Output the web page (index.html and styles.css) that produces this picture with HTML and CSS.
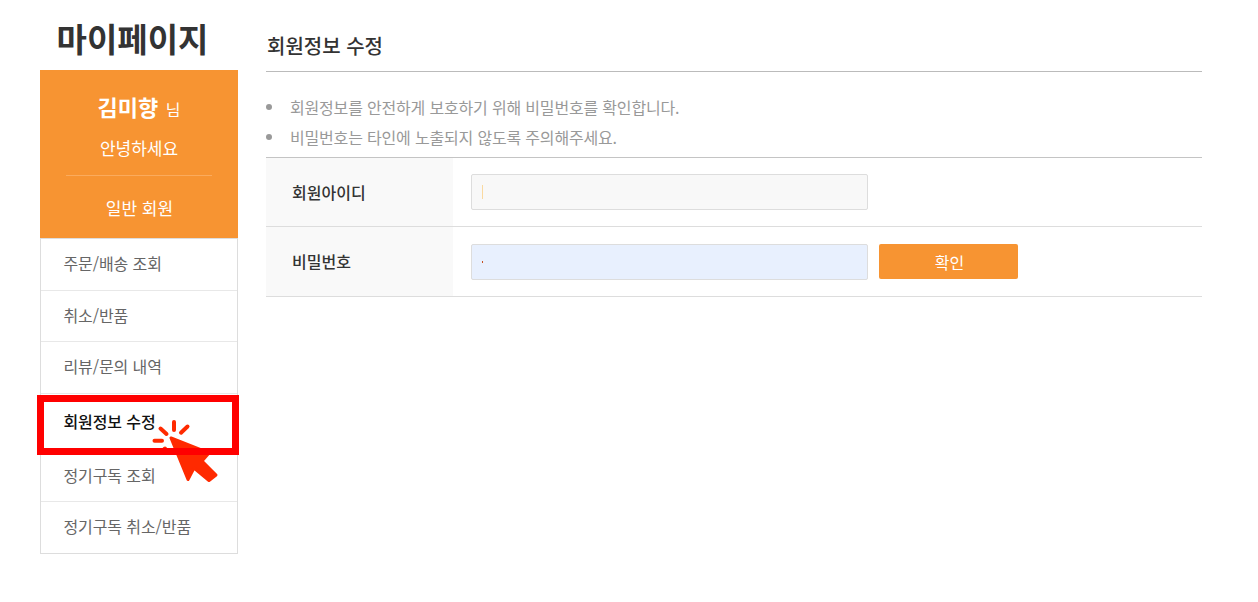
FILE: index.html
```html
<!DOCTYPE html>
<html lang="ko">
<head>
  <meta charset="UTF-8">
  <title>회원정보 수정</title>
  <link rel="stylesheet" href="styles.css">
</head>
<body>
  <div class="page">
    <aside class="side">
      <h1 class="side-title">마이페이지</h1>
      <div class="profile">
        <p class="profile-name"><strong>김미향</strong> <span>님</span></p>
        <p class="profile-hello">안녕하세요</p>
        <p class="profile-grade">일반 회원</p>
      </div>
      <ul class="side-menu">
        <li>주문/배송 조회</li>
        <li>취소/반품</li>
        <li>리뷰/문의 내역</li>
        <li class="on">회원정보 수정</li>
        <li>정기구독 조회</li>
        <li>정기구독 취소/반품</li>
      </ul>
      <svg class="pointer" width="70" height="72" viewBox="0 0 70 72">
        <g stroke="#ff2a00" stroke-width="4" stroke-linecap="round" fill="none">
          <path d="M24 11V19"/>
          <path d="M10.500 17.500L16.500 23"/>
          <path d="M31 21.700L37.500 15.500"/>
          <path d="M4.500 29.700H12"/>
          <path d="M10.500 42L15 37.500"/>
        </g>
        <path fill="#ff2a00" stroke="#ff2a00" stroke-width="3" stroke-linejoin="round" d="M21 27L59 42L52 50L66 64L59 69.500L44 57L38 68.500Z"/>
      </svg>
      <div class="mark"></div>
    </aside>
    <main class="main">
      <h2 class="main-title">회원정보 수정</h2>
      <ul class="notice">
        <li>회원정보를 안전하게 보호하기 위해 비밀번호를 확인합니다.</li>
        <li>비밀번호는 타인에 노출되지 않도록 주의해주세요.</li>
      </ul>
      <div class="form">
        <div class="form-row">
          <div class="form-label">회원아이디</div>
          <div class="form-field">
            <div class="input input-id"><i class="blot-id"></i></div>
          </div>
        </div>
        <div class="form-row">
          <div class="form-label">비밀번호</div>
          <div class="form-field">
            <div class="input input-pw"><i class="blot-pw"></i></div>
            <button class="btn">확인</button>
          </div>
        </div>
      </div>
    </main>
  </div>
</body>
</html>
```

FILE: styles.css
```css
* {
  box-sizing: border-box;
}
body {
  margin: 0;
  background: #fff;
  font-family: "Noto Sans CJK KR", "Noto Sans", sans-serif;
  color: #333;
}
.page {
  display: flex;
  gap: 28px;
  padding: 0 56px 0 40px;
}
.side {
  position: relative;
  width: 198px;
  flex: none;
}
.side-title {
  margin: 0 0 0 -13px;
  width: 211px;
  height: 70px;
  font-size: 33px;
  line-height: 77px;
  font-weight: 700;
  text-align: center;
  white-space: nowrap;
  color: #333;
}
.profile {
  height: 168px;
  padding: 0 26px;
  background: #f79432;
  color: #fff;
  text-align: center;
}
.profile p {
  margin: 0;
}
.profile-name {
  padding-top: 19px;
  height: 58px;
  font-size: 16px;
  line-height: 34px;
}
.profile-name strong {
  font-size: 22px;
}
.profile-name span {
  margin-left: 3px;
}
.profile-hello {
  height: 48px;
  font-size: 17px;
  line-height: 40px;
  border-bottom: 1px solid #fbab5d;
}
.profile-grade {
  padding-left: 1px;
  font-size: 17px;
  line-height: 64px;
}
.side-menu {
  margin: 0;
  padding: 0;
  list-style: none;
  border: 1px solid #ddd;
}
.side-menu li {
  height: 51.500px;
  padding-left: 22.500px;
  font-size: 16px;
  letter-spacing: -0.1px;
  line-height: 48px;
  color: #666;
  border-bottom: 1px solid #e8e8e8;
}
.side-menu li:last-child {
  border-bottom: 0;
}
.side-menu .on {
  height: 56.500px;
  line-height: 54px;
  color: #111;
  font-weight: 500;
}
.side-menu .on + li {
  line-height: 50px;
}
.mark {
  position: absolute;
  left: -3px;
  top: 395px;
  width: 202px;
  height: 60px;
  border: 7px solid #f00;
}
.pointer {
  position: absolute;
  left: 110px;
  top: 411px;
  overflow: visible;
}
.main {
  flex: 1;
  padding-top: 20px;
}
.main-title {
  margin: 0;
  height: 52px;
  padding-left: 1px;
  font-size: 20px;
  font-weight: 500;
  line-height: 51px;
  border-bottom: 1px solid #bbb;
}
.notice {
  margin: 0;
  padding: 20px 0 0;
  height: 85px;
  list-style: none;
  color: #999;
  font-size: 16px;
  letter-spacing: -0.18px;
  line-height: 30px;
}
.notice li {
  display: flex;
  align-items: center;
}
.notice li::before {
  content: "";
  width: 6px;
  height: 6px;
  margin-right: 18px;
  border-radius: 50%;
  background: #999;
}
.form {
  border-top: 1px solid #c4c4c4;
}
.form-row {
  display: flex;
  height: 70px;
  border-bottom: 1px solid #ddd;
}
.form-row:first-child {
  height: 69px;
}
.form-label {
  width: 187px;
  padding-left: 26px;
  background: #f9f9f9;
  color: #333;
  font-size: 16px;
  font-weight: 500;
  line-height: 68px;
}
.form-field {
  display: flex;
  align-items: center;
  gap: 11px;
  padding-left: 18px;
}
.input {
  width: 397px;
  height: 36px;
  border: 1px solid #ddd;
  border-radius: 2px;
  display: flex;
  align-items: center;
  padding-left: 10px;
}
.input-id {
  background: #f8f8f8;
}
.input-pw {
  background: #e8f0fe;
}
.blot-id {
  width: 1px;
  height: 14px;
  background: #fad9a0;
}
.blot-pw {
  width: 1px;
  height: 2px;
  background: #c8501e;
}
.btn {
  width: 139px;
  height: 35px;
  padding: 0 0 0 2px;
  border: 0;
  border-radius: 2px;
  background: #f79432;
  color: #fff;
  font: inherit;
  font-size: 16px;
}
```
